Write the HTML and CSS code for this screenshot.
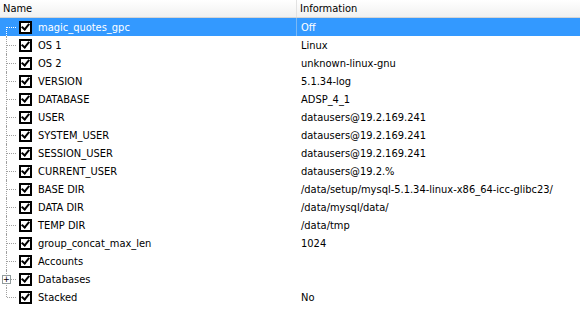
FILE: index.html
```html
<!DOCTYPE html>
<html lang="en">
<head>
    <meta charset="UTF-8">
    <title>Information</title>
    <link rel="stylesheet" href="styles.css">
</head>
<body>
    <div class="grid">
        <!-- header -->
        <div class="head">
            <div class="col name-col">Name</div>
            <div class="col info-col">Information</div>
        </div>

        <div class="row selected first">
            <div class="col name-col"><span class="tree"></span><span class="check"></span><span class="label">magic_quotes_gpc</span></div>
            <div class="col info-col">Off</div>
        </div>
        <div class="row">
            <div class="col name-col"><span class="tree"></span><span class="check"></span><span class="label">OS 1</span></div>
            <div class="col info-col">Linux</div>
        </div>
        <div class="row">
            <div class="col name-col"><span class="tree"></span><span class="check"></span><span class="label">OS 2</span></div>
            <div class="col info-col">unknown-linux-gnu</div>
        </div>
        <div class="row">
            <div class="col name-col"><span class="tree"></span><span class="check"></span><span class="label">VERSION</span></div>
            <div class="col info-col">5.1.34-log</div>
        </div>
        <div class="row">
            <div class="col name-col"><span class="tree"></span><span class="check"></span><span class="label">DATABASE</span></div>
            <div class="col info-col">ADSP_4_1</div>
        </div>
        <div class="row">
            <div class="col name-col"><span class="tree"></span><span class="check"></span><span class="label">USER</span></div>
            <div class="col info-col">datausers@19.2.169.241</div>
        </div>
        <div class="row">
            <div class="col name-col"><span class="tree"></span><span class="check"></span><span class="label">SYSTEM_USER</span></div>
            <div class="col info-col">datausers@19.2.169.241</div>
        </div>
        <div class="row">
            <div class="col name-col"><span class="tree"></span><span class="check"></span><span class="label">SESSION_USER</span></div>
            <div class="col info-col">datausers@19.2.169.241</div>
        </div>
        <div class="row">
            <div class="col name-col"><span class="tree"></span><span class="check"></span><span class="label">CURRENT_USER</span></div>
            <div class="col info-col">datausers@19.2.%</div>
        </div>
        <div class="row">
            <div class="col name-col"><span class="tree"></span><span class="check"></span><span class="label">BASE DIR</span></div>
            <div class="col info-col">/data/setup/mysql-5.1.34-linux-x86_64-icc-glibc23/</div>
        </div>
        <div class="row">
            <div class="col name-col"><span class="tree"></span><span class="check"></span><span class="label">DATA DIR</span></div>
            <div class="col info-col">/data/mysql/data/</div>
        </div>
        <div class="row">
            <div class="col name-col"><span class="tree"></span><span class="check"></span><span class="label">TEMP DIR</span></div>
            <div class="col info-col">/data/tmp</div>
        </div>
        <div class="row">
            <div class="col name-col"><span class="tree"></span><span class="check"></span><span class="label">group_concat_max_len</span></div>
            <div class="col info-col">1024</div>
        </div>
        <div class="row">
            <div class="col name-col"><span class="tree"></span><span class="check"></span><span class="label">Accounts</span></div>
            <div class="col info-col"></div>
        </div>
        <div class="row">
            <div class="col name-col"><span class="tree"><span class="plus">+</span></span><span class="check"></span><span class="label">Databases</span></div>
            <div class="col info-col"></div>
        </div>
        <div class="row last">
            <div class="col name-col"><span class="tree"></span><span class="check"></span><span class="label">Stacked</span></div>
            <div class="col info-col">No</div>
        </div>
    </div>
</body>
</html>
```

FILE: styles.css
```css
body {
    margin: 0;
    background-color: #fff;
    font-family: "DejaVu Sans Condensed", "DejaVu Sans", Tahoma, sans-serif;
    font-size: 11px;
    color: #000;
}
.grid {
    width: 580px;
}
.head, .row {
    display: grid;
    grid-template-columns: 297px 1fr;
}
.head {
    height: 17px;
    background: linear-gradient(#ffffff, #f1f1f0);
    border-bottom: 1px solid #d5d5d5;
    line-height: 17px;
}
.head .name-col {
    padding-left: 3px;
    border-right: 1px solid #e2e2e2;
}
.head .info-col {
    padding-left: 3px;
}
.row {
    height: 18px;
    line-height: 19px;
}
.col {
    white-space: nowrap;
    overflow: hidden;
}
.row .name-col {
    display: flex;
    align-items: center;
}
.row .info-col {
    padding-left: 4px;
}
.selected {
    background-color: #3399ff;
    color: #fff;
}
.selected .name-col {
    border-right: 1px solid #7ab8f5;
}
.tree {
    position: relative;
    width: 19px;
    height: 18px;
    flex: none;
}
/* vertical dotted line */
.tree::before {
    content: "";
    position: absolute;
    left: 6px;
    top: 0;
    bottom: 0;
    border-left: 1px dotted #a0a0a0;
}
/* horizontal dotted line */
.tree::after {
    content: "";
    position: absolute;
    left: 7px;
    width: 9px;
    top: 9px;
    border-top: 1px dotted #a0a0a0;
}
.first .tree::before {
    top: 9px;
    border-color: #fff;
}
.first .tree::after {
    border-color: #fff;
}
.last .tree::before {
    bottom: 9px;
}
.plus {
    position: absolute;
    left: 2px;
    top: 5px;
    width: 7px;
    height: 7px;
    border: 1px solid #919b9c;
    background: #fff;
    color: #000;
    font-size: 9px;
    line-height: 7px;
    text-align: center;
    z-index: 1;
}
.check {
    flex: none;
    width: 9px;
    height: 9px;
    border: 2px solid #000;
    background: #fff;
    position: relative;
    margin-right: 6px;
}
.check::after {
    content: "";
    position: absolute;
    left: 2px;
    top: -1px;
    width: 3px;
    height: 6px;
    border: solid #000;
    border-width: 0 2px 2px 0;
    transform: rotate(40deg);
}
.label {
    padding-left: 0;
}
```
